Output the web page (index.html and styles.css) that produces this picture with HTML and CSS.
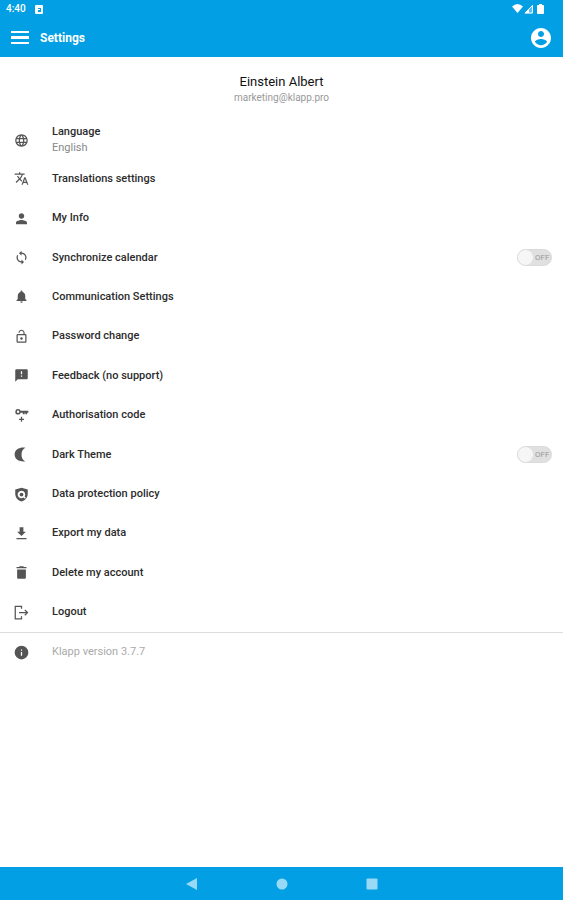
FILE: index.html
```html
<!DOCTYPE html>
<html lang="en">
<head>
<meta charset="utf-8">
<meta name="viewport" content="width=device-width, initial-scale=1">
<title>Settings</title>
<link rel="stylesheet" href="styles.css">
</head>
<body>
<header class="top">
  <div class="status">
    <span>4:40</span>
    <svg class="status-app" viewBox="0 0 8 9"><path fill="#fff" fill-rule="evenodd" d="M1 0h6q1 0 1 1v7q0 1-1 1H1q-1 0-1-1V1q0-1 1-1zM3 3v1h2v1H3v2h3V3z"/></svg>
    <svg class="status-signals" viewBox="0 0 32 10"><path fill="#fff" d="M0 2.500Q5.500-2.500 11 2.500L5.500 9z"/><path fill="#fff" fill-opacity=".35" d="M12 9.500 21 .5v9z"/><path fill="none" stroke="#fff" d="M13 9 20.500 1.500V9z"/><path fill="#fff" d="M13 9l4-4v4zM26 1h1V0h3v1h1q1 0 1 1v7q0 1-1 1h-5q-1 0-1-1V2q0-1 1-1z"/></svg>
  </div>
  <div class="bar">
    <button class="icon-button" type="button" aria-label="Menu"><svg class="menu-icon" viewBox="0 0 18 13"><path fill="#fff" d="M0 0h18v2H0zM0 5h18v3H0zM0 11h18v2H0z"/></svg></button>
    <h1>Settings</h1>
    <button class="icon-button account" type="button" aria-label="Account"><svg class="account-icon" viewBox="2 2 20 20"><path fill="#fff" d="M12 2C6.480 2 2 6.480 2 12s4.480 10 10 10 10-4.480 10-10S17.520 2 12 2zm0 3c1.660 0 3 1.340 3 3s-1.340 3-3 3-3-1.340-3-3 1.340-3 3-3zm0 14.200c-2.500 0-4.710-1.280-6-3.220.030-1.990 4-3.080 6-3.080 1.990 0 5.970 1.090 6 3.080-1.290 1.940-3.500 3.220-6 3.220z"/></svg></button>
  </div>
</header>
<main>
  <section class="profile">
    <h2>Einstein Albert</h2>
    <p>marketing@klapp.pro</p>
  </section>
  <a class="row language" href="#language">
    <svg class="icon" viewBox="0 0 24 24"><path d="M11.990 2C6.470 2 2 6.480 2 12s4.470 10 9.990 10C17.520 22 22 17.520 22 12S17.520 2 11.990 2zm6.930 6h-2.950c-.320-1.250-.780-2.450-1.380-3.560 1.840.630 3.370 1.910 4.330 3.560zM12 4.040c.830 1.200 1.480 2.530 1.910 3.960h-3.820c.430-1.430 1.080-2.760 1.910-3.960zM4.260 14C4.100 13.360 4 12.690 4 12s.100-1.360.260-2h3.380c-.080.660-.140 1.320-.140 2 0 .680.060 1.340.140 2H4.260zm.820 2h2.950c.320 1.250.780 2.450 1.380 3.560-1.840-.630-3.370-1.900-4.330-3.560zm2.950-8H5.080c.960-1.660 2.490-2.930 4.330-3.560C8.810 5.550 8.350 6.750 8.030 8zM12 19.960c-.830-1.200-1.480-2.530-1.910-3.960h3.820c-.430 1.430-1.080 2.760-1.910 3.960zM14.340 14H9.660c-.090-.660-.160-1.320-.160-2 0-.680.070-1.350.160-2h4.680c.090.650.160 1.320.160 2 0 .680-.070 1.340-.160 2zm.250 5.560c.600-1.110 1.060-2.310 1.380-3.560h2.950c-.960 1.650-2.490 2.930-4.330 3.560zM16.360 14c.080-.660.140-1.320.140-2 0-.680-.060-1.340-.140-2h3.380c.160.640.260 1.310.260 2s-.100 1.360-.260 2h-3.380z"/></svg>
    <span>Language<small>English</small></span>
  </a>
  <ul class="list">
    <li><a class="row" href="#translations"><svg class="icon" viewBox="0 0 24 24"><path d="M12.870 15.070l-2.540-2.510.030-.030c1.740-1.940 2.980-4.170 3.710-6.530H17V4h-7V2H8v2H1v1.990h11.170C11.500 7.920 10.440 9.750 9 11.350 8.070 10.320 7.300 9.190 6.690 8h-2c.730 1.630 1.730 3.170 2.980 4.560l-5.090 5.020L4 19l5-5 3.110 3.110.760-2.040zM18.500 10h-2L12 22h2l1.120-3h4.750L21 22h2l-4.500-12zm-2.620 7l1.620-4.330L19.120 17h-3.240z"/></svg><span>Translations settings</span></a></li>
    <li><a class="row" href="#info"><svg class="icon" viewBox="0 0 24 24"><path d="M12 12c2.210 0 4-1.790 4-4s-1.790-4-4-4-4 1.790-4 4 1.790 4 4 4zm0 2c-2.670 0-8 1.340-8 4v2h16v-2c0-2.660-5.330-4-8-4z" transform="translate(-1.200 -1)scale(1.100)"/></svg><span>My Info</span></a></li>
    <li><label class="row"><svg class="icon" viewBox="0 0 24 24"><path d="M12 4V1L8 5l4 4V6c3.310 0 6 2.690 6 6 0 1.010-.250 1.970-.700 2.800l1.460 1.460C19.540 15.030 20 13.570 20 12c0-4.420-3.580-8-8-8zm0 14c-3.310 0-6-2.690-6-6 0-1.010.250-1.970.700-2.800L5.240 7.740C4.460 8.970 4 10.430 4 12c0 4.420 3.580 8 8 8v3l4-4-4-4v3z"/></svg><span>Synchronize calendar</span><input class="switch" type="checkbox" role="switch"><i class="track" aria-hidden="true">OFF</i></label></li>
    <li><a class="row" href="#communication"><svg class="icon" viewBox="0 0 24 24"><path d="M12 22c1.100 0 2-.900 2-2h-4c0 1.100.890 2 2 2zm6-6v-5c0-3.070-1.640-5.640-4.500-6.320V4c0-.830-.670-1.500-1.500-1.500s-1.500.670-1.500 1.500v.680C7.630 5.360 6 7.920 6 11v5l-2 2v1h16v-1l-2-2z"/></svg><span>Communication Settings</span></a></li>
    <li><a class="row" href="#password"><svg class="icon" viewBox="0 0 24 24"><path d="M12 17c1.100 0 2-.900 2-2s-.900-2-2-2-2 .900-2 2 .900 2 2 2zm6-9h-1V6c0-2.760-2.240-5-5-5S7 3.240 7 6h1.900c0-1.710 1.390-3.100 3.100-3.100s3.100 1.390 3.100 3.100v2H6c-1.100 0-2 .900-2 2v10c0 1.100.900 2 2 2h12c1.100 0 2-.900 2-2V10c0-1.100-.900-2-2-2zm0 12H6V10h12v10z"/></svg><span>Password change</span></a></li>
    <li><a class="row" href="#feedback"><svg class="icon" viewBox="0 0 24 24"><path d="M20 2H4c-1.100 0-1.990.900-1.990 2L2 22l4-4h14c1.100 0 2-.900 2-2V4c0-1.100-.900-2-2-2zm-7 12h-2v-2h2v2zm0-4h-2V5h2v5z"/></svg><span>Feedback (no support)</span></a></li>
    <li><a class="row" href="#code"><svg class="icon" viewBox="0 0 24 24"><path d="M6.500 1.500a4.500 4.500 0 1 0 4.200 6H14V10h3V7.500h1V10h3V7.500h2v-3H10.700a4.500 4.500 0 0 0-4.200-3zm0 2.500a2 2 0 1 1 0 4 2 2 0 0 1 0-4zM11 14h2v3h3v2h-3v3h-2v-3H8v-2h3z"/></svg><span>Authorisation code</span></a></li>
    <li><label class="row"><svg class="icon" viewBox="0 0 24 24"><path d="M18 1C9 0 1 4 1 12s8 12 17 11c-4-2-6-6-6-11s2-9 6-11z"/></svg><span>Dark Theme</span><input class="switch" type="checkbox" role="switch"><i class="track" aria-hidden="true">OFF</i></label></li>
    <li><a class="row" href="#policy"><svg class="icon" viewBox="0 0 24 24"><path fill-rule="evenodd" d="M12 1 2 4v7c0 5.550 4.500 10.740 10 12 5.500-1.260 10-6.450 10-12V4zM12 6a6 6 0 0 1 5 9.300l2 2-1.500 1.500-2-2A6 6 0 1 1 12 6z"/><circle cx="12" cy="12" r="3"/></svg><span>Data protection policy</span></a></li>
    <li><a class="row" href="#export"><svg class="icon" viewBox="0 0 24 24"><path d="M19 9h-4V2H9v7H5l7 7 7-7zM4 19v2h16v-2H4z"/></svg><span>Export my data</span></a></li>
    <li><a class="row" href="#delete"><svg class="icon" viewBox="0 0 24 24"><path d="M5 20c0 1.500.900 2 2 2h10c1.100 0 2-.500 2-2V7H5v13zM20 3h-4l-1-1H9L8 3H4v2h16V3z"/></svg><span>Delete my account</span></a></li>
    <li><a class="row" href="#logout"><svg class="icon" viewBox="0 0 24 24"><path d="M3 1h10v5h-2V3H3v18h8v-3h2v5H1V1zM18 7l5 5-5 5-1.400-1.400L19.200 13H8v-2h11.200l-2.600-2.600z"/></svg><span>Logout</span></a></li>
  </ul>
  <p class="row version"><svg class="icon" viewBox="0 0 24 24"><path d="M12 1a11 11 0 1 0 0 22 11 11 0 0 0 0-22zm1 16h-2v-6h2v6zm0-8h-2V7h2v2z"/></svg><span>Klapp version 3.7.7</span></p>
</main>
<nav class="system">
  <button class="icon-button" type="button" aria-label="Back"><svg viewBox="0 0 12 12"><path d="M11 0v12L0 6z"/></svg></button>
  <button class="icon-button" type="button" aria-label="Home"><svg viewBox="0 0 12 12"><circle cx="6" cy="6" r="5.500"/></svg></button>
  <button class="icon-button" type="button" aria-label="Recents"><svg viewBox="0 0 12 12"><rect x=".5" y=".5" width="11" height="11" rx="1"/></svg></button>
</nav>
</body>
</html>
```
FILE: styles.css
```css
* { box-sizing: border-box; }
body {
  margin: 0;
  min-height: 100vh;
  display: flex;
  flex-direction: column;
  background: #fff;
  color: #2c2c2c;
  font: 500 11px/16px Roboto, sans-serif;
}
h1, h2, p, ul { margin: 0; padding: 0; }
svg { display: block; }
.top { background: #029fe4; color: #fff; }
.status {
  display: flex;
  align-items: center;
  height: 18px;
  padding: 0 19px 0 6px;
  font-size: 10px;
}
.status-app { width: 8px; height: 9px; margin-left: 9px; }
.status-signals { width: 32px; height: 10px; margin-left: auto; }
.bar { display: flex; align-items: center; height: 39px; padding: 0 12px 0 11px; }
.icon-button { padding: 0; border: 0; background: none; }
.menu-icon { width: 18px; height: 13px; }
.account { margin-left: auto; }
.account-icon { width: 20px; height: 20px; }
h1 { margin-left: 11px; font-size: 12px; font-weight: 700; }
main { flex: 1; }
.profile { padding: 17px 0 15px; text-align: center; }
h2 { font-size: 13px; font-weight: 400; color: #111; }
.profile p { color: #999; font-size: 10px; font-weight: 400; }
.row {
  display: flex;
  align-items: center;
  height: 100%;
  padding: 0 11px 0 14px;
  color: inherit;
  text-decoration: none;
}
.language { height: 38px; }
small { display: block; color: #888; font-size: 11px; font-weight: 400; }
.icon { width: 15px; height: 15px; margin-right: 23px; fill: #555; }
.list {
  display: grid;
  grid-auto-rows: 1fr;
  min-height: 474px;
  list-style: none;
  border-bottom: 1px solid #ddd;
}
.version { height: 38px; color: #aaa; font-weight: 400; }
.switch { position: absolute; opacity: 0; }
.track {
  display: flex;
  align-items: center;
  width: 35px;
  height: 17px;
  margin-left: auto;
  border: 1px solid #dadada;
  border-radius: 9px;
  background: #e0e0e0;
  color: #999;
  font-size: 8px;
  font-style: normal;
  font-weight: 400;
}
.track::before {
  content: "";
  width: 15px;
  height: 15px;
  margin-right: 2px;
  border-radius: 50%;
  background: #f6f6f6;
}
.switch:checked + .track { flex-direction: row-reverse; }
.switch:focus-visible + .track { outline: 2px solid #029fe4; }
.system {
  display: flex;
  align-items: center;
  justify-content: center;
  gap: 78px;
  height: 33px;
  background: #029fe4;
}
.system svg { width: 12px; height: 12px; fill: #98daf6; }
```
